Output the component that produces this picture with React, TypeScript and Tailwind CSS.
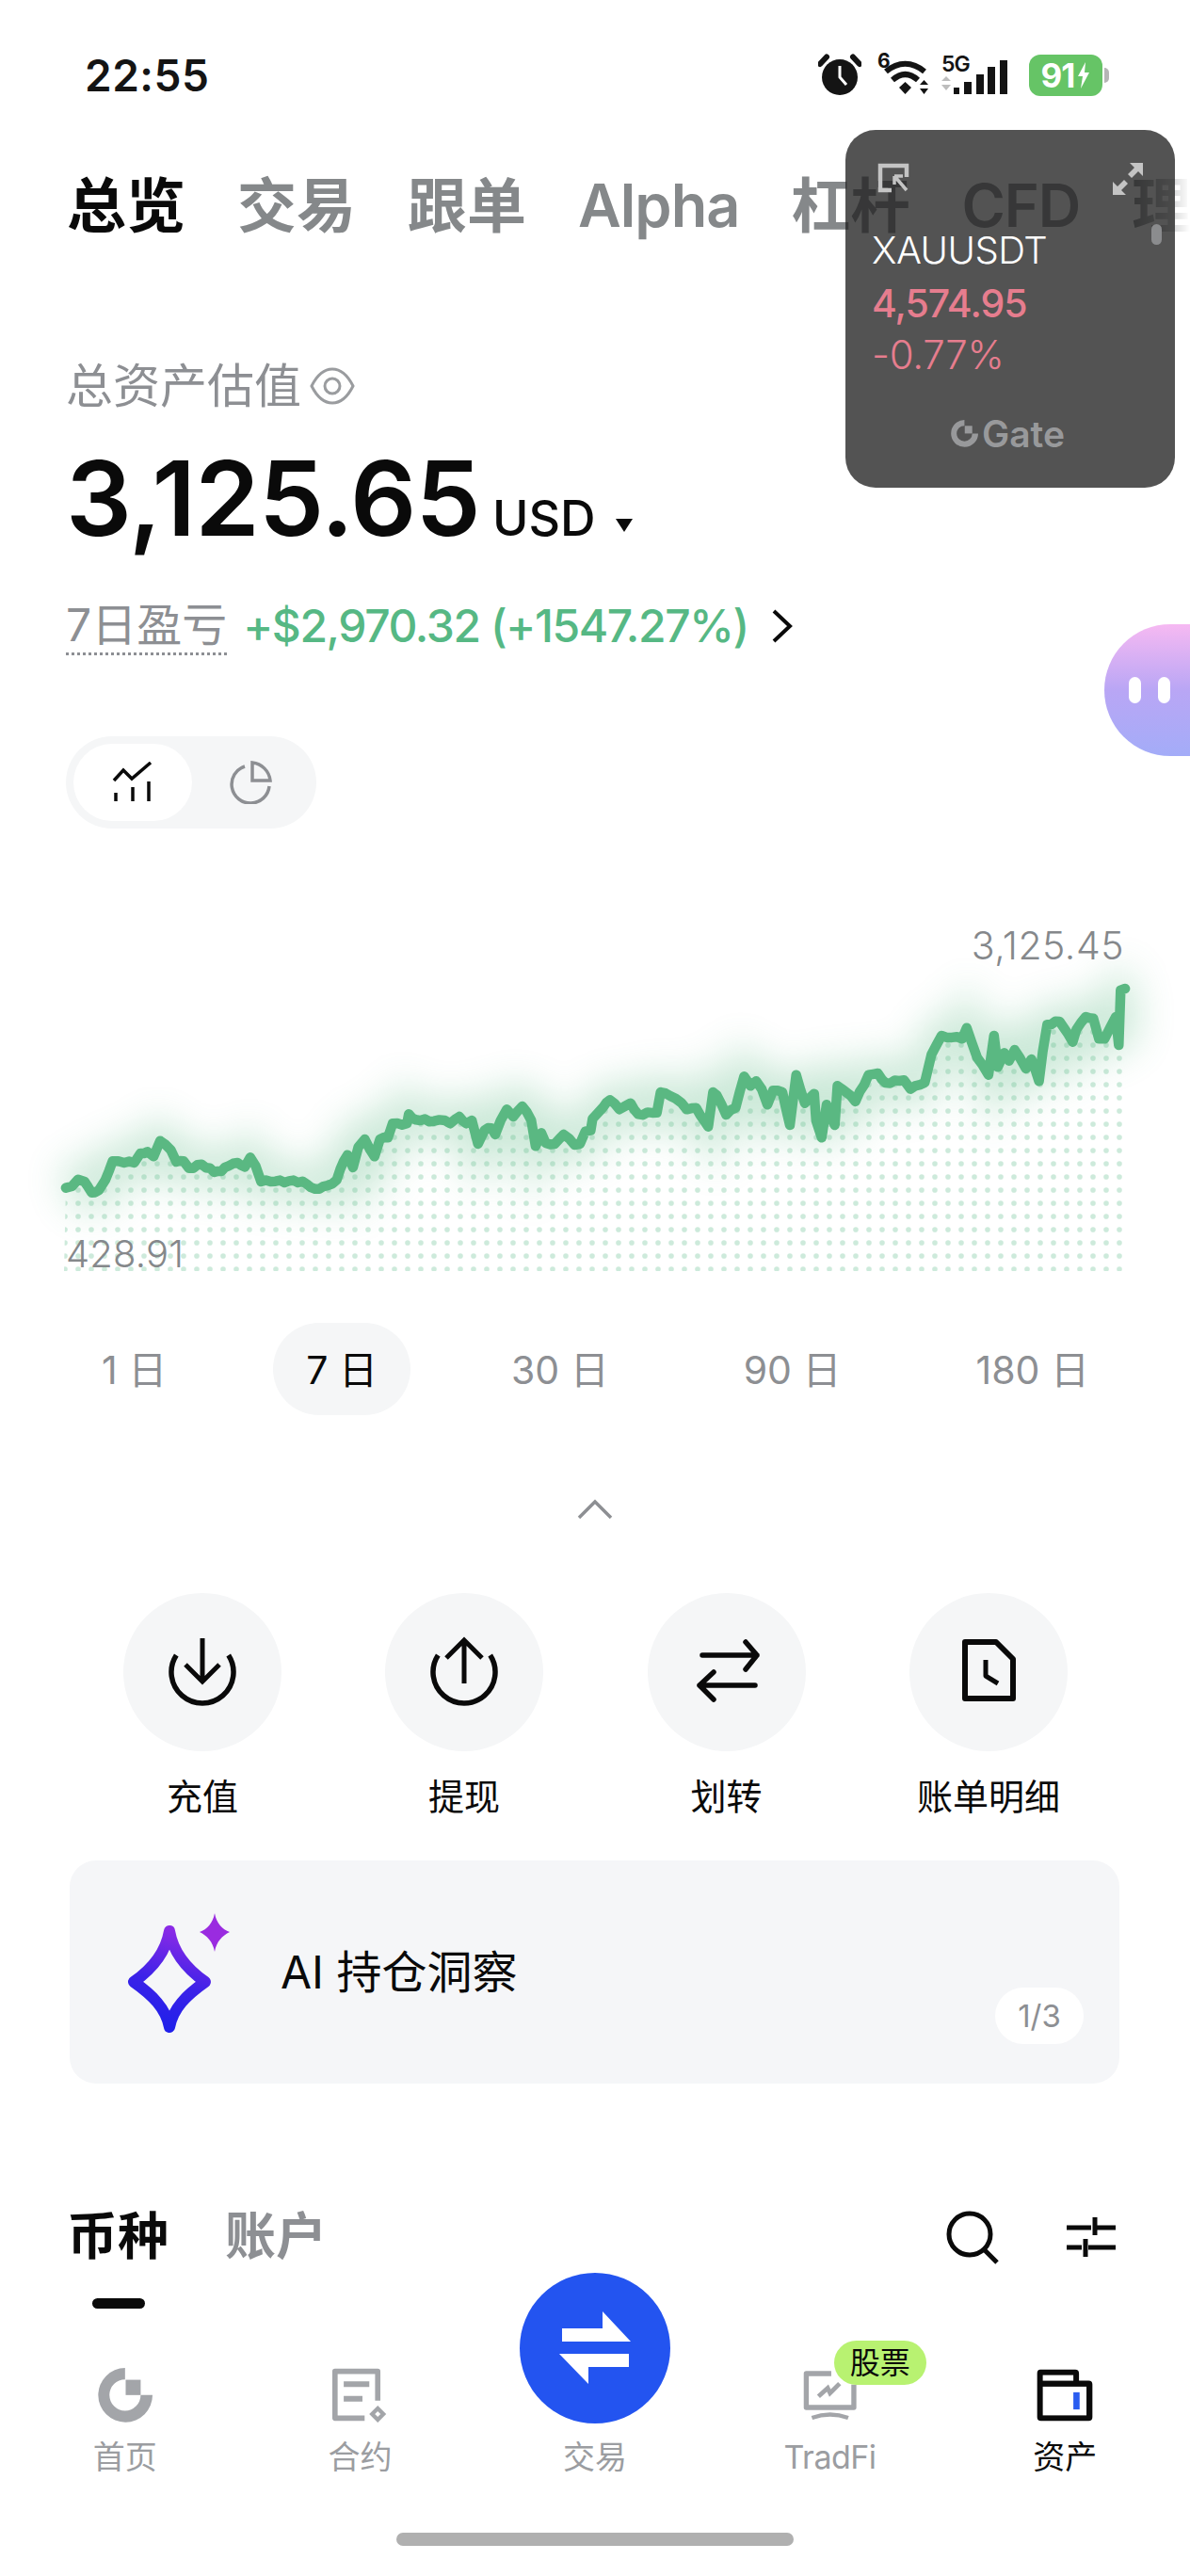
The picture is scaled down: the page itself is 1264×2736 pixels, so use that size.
const lineLeft: Array<[number, number]> = [[78,905],[95,900],[112,878],[130,885],[150,920],[170,912],[188,880],[208,820],[240,825],[268,825],[285,795],[305,790],[322,805],[340,755],[370,785],[385,822],[405,820],[420,842],[455,830],[490,855],[510,852],[530,835],[555,825],[575,838],[590,808],[605,835],[620,885],[660,884],[735,884],[770,908],[805,897],[830,880],[840,845],[860,800],[875,840],[890,775],[908,750],[935,805],[950,750],[972,745],[985,700],[1025,700],[1030,670],[1050,688],[1100,692],[1130,690],[1145,700],[1170,678],[1190,700],[1205,690],[1222,765],[1240,722],[1260,715],[1270,735],[1285,690],[1302,655],[1320,678],[1345,645],[1370,690],[1382,772],[1398,730],[1410,762],[1435,765],[1460,735],[1490,768],[1505,765],[1520,725],[1535,722],[1540,685],[1568,650]]

const lineRight: Array<[number, number]> = [[20,625],[45,655],[75,635],[95,670],[145,665],[155,600],[195,620],[225,655],[250,650],[282,710],[295,600],[305,610],[330,672],[355,650],[378,550],[395,580],[410,565],[425,590],[440,640],[455,595],[480,600],[500,705],[517,545],[540,635],[565,605],[570,690],[585,745],[598,640],[620,705],[627,580],[650,600],[675,630],[710,545],[735,540],[755,570],[805,562],[822,590],[860,570],[878,480],[905,420],[960,430],[972,395],[1000,490],[1030,545],[1045,420],[1055,520],[1072,475],[1085,500],[1100,465],[1130,525],[1145,495],[1165,565],[1175,470],[1187,385],[1220,375],[1255,440],[1265,400],[1290,360],[1310,365],[1325,430],[1340,430],[1370,360],[1378,450],[1383,275],[1395,270]]

const chartPts: Array<[number, number]> = [
  ...lineLeft.map(([x, y]): [number, number] => [40 + x / 2.613, 960 + y / 3]),
  ...lineRight.map(([x, y]): [number, number] => [640 + x / 2.513, 960 + y / 3]),
]

// the real series is noisy: break long segments up and wobble them a little
function buildLine() {
  const out: string[] = []
  chartPts.forEach(([x, y], i) => {
    if (i === 0) {
      out.push(`M${x.toFixed(1)} ${y.toFixed(1)}`)
      return
    }
    const [px, py] = chartPts[i - 1]
    const steps = Math.max(1, Math.round((x - px) / 5))
    for (let s = 1; s <= steps; s++) {
      const t = s / steps
      const wobble = s === steps ? 0 : Math.sin(i * 7.3 + s * 2.1) * 1.4
      out.push(`L${(px + (x - px) * t).toFixed(1)} ${(py + (y - py) * t + wobble).toFixed(1)}`)
    }
  })
  return out.join(' ')
}

const linePath = buildLine()
const areaPath = `${linePath} L1196 1350 L68 1350 Z`

const periods = ['1 日', '7 日', '30 日', '90 日', '180 日']

function GateMark({ className }: { className?: string }) {
  return (
    <svg viewBox="68 75 175 175" className={className} fill="currentColor">
      <path d="M155 75A87 87 0 1 0 243 162H205A50 50 0 1 1 155 112Z" />
      <rect x="157" y="113" width="48" height="49" />
    </svg>
  )
}

function StatusIcons() {
  return (
    <div className="flex items-center">
      <svg width="46" height="46" viewBox="0 0 46 46" className="mr-[16px]">
        <circle cx="23" cy="25" r="19" fill="#141414" />
        <path d="M2 11 9 3.500M44 11 37 3.500" stroke="#141414" strokeWidth="6" strokeLinecap="round" />
        <path d="M23 13V25L30 33" stroke="#fff" strokeWidth="3" fill="none" />
      </svg>
      <div className="relative mr-[8px] h-[46px] w-[60px]">
        <svg width="60" height="46" viewBox="0 0 60 46" fill="none">
          <path d="M10 19C23 8 38 8 51 19" stroke="#141414" strokeWidth="6" />
          <path d="M17 28C26 20 35 20 44 28" stroke="#141414" strokeWidth="6" />
          <path d="M24 36 30.500 30 37 36 30.500 43Z" fill="#141414" />
          <path d="M46 33 50.500 28 55 33ZM46 37 50.500 43 55 37Z" fill="#141414" />
        </svg>
        <span className="absolute top-[-3px] left-[1px] text-[21px] leading-[22px] font-bold text-[#141414]">6</span>
      </div>
      <div className="relative mr-[18px] h-[46px] w-[76px]">
        <svg width="76" height="46" viewBox="0 0 76 46">
          <path d="M1 29 6 24 11 29ZM1 33 6 39 11 33Z" fill="#bdbdbd" />
          <rect x="14" y="36" width="6" height="7" fill="#141414" />
          <rect x="25" y="30" width="8" height="13" fill="#141414" />
          <rect x="38" y="22" width="8" height="21" fill="#141414" />
          <rect x="50" y="14" width="8" height="29" fill="#141414" />
          <rect x="63" y="7" width="8" height="36" fill="#141414" />
        </svg>
        <span className="absolute top-[-1px] left-[1px] text-[23px] leading-[24px] font-semibold tracking-[-1px] text-[#141414]">5G</span>
      </div>
      <div className="flex h-[44px] w-[78px] items-center justify-center gap-[3px] rounded-[12px] bg-[#66c466]">
        <span className="text-[35px] leading-none font-bold tracking-[-1px] text-white">91</span>
        <svg width="14" height="28" viewBox="0 0 14 28" fill="#fff">
          <path d="M9 0 1 15H6L4 28 13 11H8Z" />
        </svg>
      </div>
      <div className="ml-[2px] h-[16px] w-[5px] rounded-r-full bg-[#b5b5b5]" />
    </div>
  )
}

function ActionIcon({ kind }: { kind: string }) {
  return (
    <svg width="80" height="80" viewBox="0 0 80 80" fill="none" stroke="#0a0a0a" strokeWidth="5">
      {kind === 'in' && (
        <>
          <path d="M12.300 22A33 33 0 1 0 67.700 22" strokeWidth="5.500" />
          <path d="M40 4V50M22 32 40 50 58 32" />
        </>
      )}
      {kind === 'out' && (
        <>
          <path d="M12.300 22A33 33 0 1 0 67.700 22" strokeWidth="5.500" />
          <path d="M40 6V52M21 25 40 6 59 25" />
        </>
      )}
      {kind === 'swap' && (
        <g strokeWidth="5.500" strokeLinecap="round" strokeLinejoin="round">
          <path d="M14 22H72M60 8 72 22 60 37" />
          <path d="M70 54H11M26 40 11 54 26 69" />
        </g>
      )}
      {kind === 'bill' && (
        <g strokeWidth="6" strokeLinejoin="round">
          <path d="M15 8H48L66 26V68H15Z" />
          <path d="M37 27V44L50 52" strokeWidth="5" />
        </g>
      )}
    </svg>
  )
}

const actions = [
  { kind: 'in', label: '充值' },
  { kind: 'out', label: '提现' },
  { kind: 'swap', label: '划转' },
  { kind: 'bill', label: '账单明细' },
]

function App() {
  return (
    <div className="relative flex h-[2736px] w-[1264px] flex-col overflow-hidden bg-white text-[#0a0a0a] [font-family:Inter,'Noto_Sans_CJK_SC',sans-serif]">
      {/* status bar */}
      <div className="flex h-[160px] shrink-0 items-center justify-between pr-[86px] pl-[90px]">
        <span className="text-[46px] leading-none font-semibold tracking-[0.5px] text-[#141414]">22:55</span>
        <StatusIcons />
      </div>

      {/* top tabs */}
      <div className="relative flex h-[116px] shrink-0 items-center gap-[55px] overflow-hidden pl-[71px] text-[63px] leading-none font-semibold whitespace-nowrap text-[#85888a]">
        <span className="text-[#0a0a0a]">总览</span>
        <span>交易</span>
        <span>跟单</span>
        <span className="tracking-[-1px]">Alpha</span>
        <span>杠杆</span>
        <span className="tracking-[-1px]">CFD</span>
        <span>理财</span>
        <div className="absolute top-0 right-0 bottom-0 w-[60px] bg-gradient-to-r from-white/0 to-white" />
      </div>

      <div className="flex shrink-0 flex-col pl-[70px]">
        <div className="mt-[98px] flex h-[72px] items-center text-[50px] leading-none text-[#8d8f93]">
          总资产估值
          <svg width="48" height="40" viewBox="0 0 48 40" fill="none" stroke="#9a9c9f" strokeWidth="3" className="ml-[9px]">
            <path d="M2 20C8 8 16 2 24 2S40 8 46 20C40 32 32 38 24 38S8 32 2 20Z" />
            <circle cx="24" cy="20" r="8" />
          </svg>
        </div>
        <div className="mt-[24px] flex h-[120px] items-end pb-[6px]">
          <span className="text-[110px] leading-[110px] font-semibold tracking-[-0.75px]">3,125.65</span>
          <span className="mb-[7px] ml-[13px] text-[52px] leading-none font-medium">USD</span>
          <svg width="20" height="16" viewBox="0 0 20 16" className="mb-[18px] ml-[20px]">
            <path d="M1 1H19L10 15Z" fill="#0a0a0a" />
          </svg>
        </div>
        <div className="mt-[45px] flex h-[60px] items-center">
          <span className="border-b-[3px] border-dotted border-[#8d8f93] text-[48px] leading-[58px] text-[#8d8f93]">7日盈亏</span>
          <span className="ml-[17px] text-[48px] leading-none font-medium tracking-[-1.4px] text-[#56b884]">+$2,970.32 (+1547.27%)</span>
          <svg width="24" height="36" viewBox="0 0 24 36" fill="none" stroke="#0a0a0a" strokeWidth="4" className="ml-[24px]">
            <path d="M3 2 20 18 3 34" />
          </svg>
        </div>
        <div className="mt-[87px] flex h-[98px] w-[266px] items-center rounded-full bg-[#f5f6f7] pl-[8px]">
          <div className="flex h-[82px] w-[126px] items-center justify-center rounded-full bg-white">
            <svg width="44" height="44" viewBox="0 0 44 44" fill="none" stroke="#0a0a0a" strokeWidth="3.500">
              <path d="M2 20 12 9 21 18 41 1" />
              <path d="M4 42V33M22 42V27M39 42V21" />
            </svg>
          </div>
          <div className="flex w-[124px] justify-center">
            <svg width="46" height="46" viewBox="0 0 46 46" fill="none" stroke="#8d8f93" strokeWidth="3.500">
              <path d="M17 6A20 20 0 1 0 43 27" />
              <path d="M25 2C35 3 43 11 44 21H25Z" />
            </svg>
          </div>
        </div>
      </div>

      {/* chart */}
      <div className="relative mt-[80px] h-[420px] w-[1264px] shrink-0">
        <svg width="1264" height="420" viewBox="0 960 1264 420">
          <defs>
            <pattern id="dots" x="62" y="1229" width="14" height="14" patternUnits="userSpaceOnUse">
              <circle cx="7" cy="7" r="2.800" fill="#cdeadb" />
            </pattern>
            <clipPath id="area">
              <path d={areaPath} />
            </clipPath>
            <filter id="glow" x="-10%" y="-60%" width="120%" height="220%">
              <feGaussianBlur stdDeviation="20" />
            </filter>
          </defs>
          <rect x="68" y="1000" width="1126" height="350" fill="url(#dots)" clipPath="url(#area)" />
          <path d={linePath} fill="none" stroke="#5ab882" strokeWidth="36" opacity="0.32" filter="url(#glow)" />
          <path d={linePath} fill="none" stroke="#5ab882" strokeWidth="10.500" strokeLinejoin="round" strokeLinecap="round" />
        </svg>
        <span className="absolute top-[20px] right-[70px] text-[41px] leading-[48px] font-light tracking-[0.5px] text-[#85888b]">3,125.45</span>
        <span className="absolute top-[350px] left-[70px] text-[40px] leading-[44px] font-light tracking-[0.2px] text-[#85888b]">428.91</span>
      </div>

      {/* period tabs */}
      <div className="mt-[25px] flex h-[98px] shrink-0 items-stretch gap-[71px] pl-[72px] text-[41px] text-[#8d8f93]">
        {periods.map((p) => (
          <div key={p} className={p === '7 日' ? 'ml-[6px] flex items-center rounded-full bg-[#f5f6f7] px-[35px] pt-[3px] text-[#0a0a0a]' : 'flex items-center px-[36px] pt-[3px]'}>
            {p}
          </div>
        ))}
      </div>

      <div className="mt-[89px] flex h-[22px] shrink-0 justify-center">
        <svg width="38" height="22" viewBox="0 0 38 22" fill="none" stroke="#8d8f93" strokeWidth="3.500">
          <path d="M2 20 19 3 36 20" />
        </svg>
      </div>

      {/* actions */}
      <div className="mt-[78px] grid shrink-0 grid-cols-[278px_278px_279px_278px] pl-[76px]">
        {actions.map((a) => (
          <div key={a.kind} className="flex flex-col items-center">
            <div className="flex h-[168px] w-[168px] items-center justify-center rounded-full bg-[#f5f6f7]">
              <ActionIcon kind={a.kind} />
            </div>
            <span className="mt-[18px] h-[60px] text-[38px] leading-[60px] whitespace-nowrap">{a.label}</span>
          </div>
        ))}
      </div>

      {/* AI card */}
      <div className="relative mt-[38px] ml-[74px] flex h-[237px] w-[1115px] shrink-0 items-center rounded-[28px] bg-[#f5f6f8] pl-[56px]">
        <svg width="118" height="132" viewBox="0 0 118 132">
          <defs>
            <linearGradient id="star" x1="0.6" y1="0" x2="0.4" y2="1">
              <stop offset="0" stopColor="#8a2ae6" />
              <stop offset="0.55" stopColor="#3b22e8" />
              <stop offset="1" stopColor="#2020ea" />
            </linearGradient>
          </defs>
          <path d="M50 22C54 45 68 62 88 76C68 90 54 104 50 124C46 104 32 90 12 76C32 62 46 45 50 22Z" fill="none" stroke="url(#star)" strokeWidth="12" strokeLinejoin="round" />
          <path d="M98 3C100 14 106 20 114 23C106 27 100 33 98 44C96 33 90 27 82 23C90 20 96 14 98 3Z" fill="#9a2be0" />
        </svg>
        <span className="ml-[50px] text-[48px] leading-none">AI 持仓洞察</span>
        <span className="absolute right-[38px] bottom-[42px] flex h-[60px] w-[94px] items-center justify-center rounded-full bg-white text-[33px] leading-none text-[#8d8f93]">1/3</span>
      </div>

      {/* asset tabs */}
      <div className="mt-[127px] flex h-[72px] shrink-0 items-center pr-[78px] pl-[71px]">
        <span className="text-[54px] leading-none font-semibold">币种</span>
        <span className="ml-[60px] text-[54px] leading-none font-semibold text-[#8d8f93]">账户</span>
        <svg width="58" height="58" viewBox="0 0 58 58" fill="none" stroke="#0a0a0a" strokeWidth="5" className="mr-[70px] ml-auto">
          <circle cx="26" cy="26" r="22" />
          <path d="M41 42 55 56" />
        </svg>
        <svg width="54" height="44" viewBox="0 0 54 44" fill="none" stroke="#0a0a0a" strokeWidth="5">
          <path d="M1 12H27M33 12H53M31 1V20" />
          <path d="M1 33H17M24 33H53M21 24V43" />
        </svg>
      </div>
      <div className="mt-[29px] ml-[98px] h-[11px] w-[56px] shrink-0 rounded-full bg-[#0a0a0a]" />

      {/* bottom nav */}
      <div className="mt-[63px] grid shrink-0 grid-cols-5 px-[8px] text-[34px] leading-none text-[#9b9da1]">
        <div className="flex flex-col items-center">
          <GateMark className="h-[58px] w-[58px] text-[#a3a5a9]" />
          <span className="mt-[20px]">首页</span>
        </div>
        <div className="flex flex-col items-center">
          <svg width="60" height="58" viewBox="820 75 178 175" fill="none" stroke="#a3a5a9">
            <path d="M967 180V86H830V236H925" strokeWidth="17" strokeLinejoin="round" />
            <path d="M858 127H940M858 174H918" strokeWidth="18" />
            <path d="M967 205 985 223 967 241 949 223Z" strokeWidth="13" />
          </svg>
          <span className="mt-[20px]">合约</span>
        </div>
        <div className="relative flex flex-col items-center">
          <div className="absolute top-[-101px] flex h-[160px] w-[160px] items-center justify-center rounded-full bg-[#2354f0]">
            <svg width="80" height="80" viewBox="592 2456 80 80" fill="#fff">
              <path d="M597 2475H640V2457L670 2489H597Z" />
              <path d="M668 2502V2516H625V2534L594 2502Z" />
            </svg>
          </div>
          <div className="h-[58px]" />
          <span className="mt-[20px]">交易</span>
        </div>
        <div className="relative flex flex-col items-center">
          <svg width="60" height="58" viewBox="92 135 190 172" fill="none" stroke="#a3a5a9">
            <path d="M190 148H106V262H266V185" strokeWidth="17" strokeLinejoin="round" />
            <path d="M125 297Q186 275 247 297" strokeWidth="14" />
            <path d="M147 225 178 197 186 214 218 182" strokeWidth="15" />
          </svg>
          <span className="mt-[20px] tracking-[-0.5px]">TradFi</span>
          <span className="absolute top-[-29px] left-[129px] flex h-[47px] w-[98px] items-center justify-center rounded-full bg-[#b8f271] text-[32px] leading-none text-[#0a0a0a]">股票</span>
        </div>
        <div className="flex flex-col items-center text-[#0a0a0a]">
          <svg width="60" height="58" viewBox="846 138 181 169">
            <path d="M858 140H970Q982 140 982 152V176H1013Q1025 176 1025 188V293Q1025 305 1013 305H860Q848 305 848 293V152Q848 140 858 140Z" fill="#0a0a0a" />
            <rect x="866" y="158" width="98" height="18" fill="#fff" />
            <rect x="866" y="195" width="140" height="92" fill="#fff" />
            <rect x="964" y="213" width="20" height="55" fill="#2a5df0" />
          </svg>
          <span className="mt-[20px]">资产</span>
        </div>
      </div>

      <div className="mt-auto mb-[32px] h-[14px] w-[422px] shrink-0 self-center rounded-full bg-[#b0b0b0]" />

      {/* floating price window */}
      <div className="absolute top-[138px] left-[898px] flex h-[380px] w-[350px] flex-col rounded-[32px] bg-[rgba(31,31,31,0.77)] pt-[35px] pr-[33px] pl-[28px]">
        <div className="flex h-[32px] justify-between pl-[6px]">
          <svg width="34" height="32" viewBox="0 0 34 32" fill="none" stroke="#c4c4c4" strokeWidth="4.500">
            <path d="M15 29H3V3H31V15" />
            <path d="M18 14 31 29M18 14H27M18 14V23" strokeWidth="3.500" />
          </svg>
          <svg width="34" height="34" viewBox="0 0 34 34" fill="#c4c4c4">
            <path d="M19 0H33V14L28 9 21 16 17 12 24 5Z" />
            <path d="M15 34H1V20L6 25 13 18 17 22 10 29Z" />
          </svg>
        </div>
        <div className="absolute top-[100px] right-[14px] h-[22px] w-[11px] rounded-full bg-[#8b8c8e]" />
        <span className="mt-[37px] text-[40px] leading-[48px] font-light tracking-[-0.5px] text-white">XAUUSDT</span>
        <span className="mt-[7px] text-[41px] leading-[50px] font-medium tracking-[-1px] text-[#e67d8e]">4,574.95</span>
        <span className="mt-[5px] text-[42px] leading-[50px] font-light tracking-[-0.3px] text-[#e67d8e]">-0.77%</span>
        <div className="mt-[39px] flex items-center justify-center gap-[4px] text-[#98999b]">
          <GateMark className="h-[29px] w-[29px]" />
          <span className="text-[39px] leading-none font-semibold">Gate</span>
        </div>
      </div>

      {/* assistant bubble */}
      <div className="absolute top-[663px] left-[1173px] flex h-[140px] w-[180px] items-center gap-[18px] rounded-full bg-gradient-to-b from-[#f6b9f2] via-[#b9a6f5] to-[#a3acf8] pl-[26px]">
        <div className="h-[28px] w-[13px] rounded-full bg-white" />
        <div className="h-[28px] w-[13px] rounded-full bg-white" />
      </div>
    </div>
  )
}

export default App
